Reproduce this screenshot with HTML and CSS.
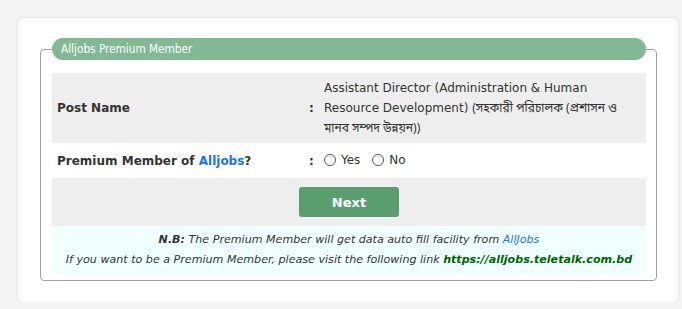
FILE: index.html
```html
<!DOCTYPE html>
<html lang="en">
<head>
  <meta charset="UTF-8">
  <meta name="viewport" content="width=device-width, initial-scale=1.0">
  <title>Alljobs Premium Member</title>
  <link rel="stylesheet" href="styles.css">
</head>
<body>
  <div class="card">
    <fieldset class="premium-box">
      <legend>Alljobs Premium Member</legend>
      <table class="info-table">
        <tr class="row-gray">
          <td class="label">Post Name</td>
          <td class="colon">:</td>
          <td class="value">Assistant Director (Administration &amp; Human Resource Development) <span class="bn">(সহকারী পরিচালক (প্রশাসন ও মানব সম্পদ উন্নয়ন))</span></td>
        </tr>
        <tr class="row-white">
          <td class="label">Premium Member of <span class="brand">Alljobs</span>?</td>
          <td class="colon">:</td>
          <td class="value">
            <label class="radio"><span class="circle"></span>Yes</label>
            <label class="radio"><span class="circle"></span>No</label>
          </td>
        </tr>
        <tr class="row-gray">
          <td colspan="3" class="btn-cell"><button class="next-btn">Next</button></td>
        </tr>
        <tr class="row-note">
          <td colspan="3" class="note">
            <b>N.B:</b> The Premium Member will get data auto fill facility from <a href="#" class="alljobs-link">AllJobs</a><br>
            If you want to be a Premium Member, please visit the following link <a href="#" class="site-link">https://alljobs.teletalk.com.bd</a>
          </td>
        </tr>
      </table>
    </fieldset>
  </div>
</body>
</html>
```

FILE: styles.css
```css
body {
  margin: 0;
  padding: 18px 4px 0 18px;
  background-color: #f4f4f4;
  font-family: "DejaVu Sans", Verdana, "Noto Sans", sans-serif;
  font-size: 12px;
  color: #333;
}

/* 外框卡片 */
.card {
  background-color: #fff;
  border-radius: 6px;
  box-shadow: 0 0 3px rgba(0, 0, 0, 0.12);
  padding: 20px 21px 21px 22px;
}

/* fieldset */
.premium-box {
  margin: 0;
  border: 1px solid #a0a0a0;
  border-radius: 4px;
  padding: 2px 10px 6px 11px;
}

.premium-box legend {
  box-sizing: border-box;
  width: 100%;
  padding: 0 9px;
  height: 22px;
  line-height: 22px;
  background-color: #82b994;
  color: #fff;
  border-radius: 11px;
  font-family: "DejaVu Sans Condensed", "DejaVu Sans", sans-serif;
  font-stretch: condensed;
  font-size: 11.7px;
}

/* 表格 */
.info-table {
  width: 100%;
  border-collapse: collapse;
  margin-top: 11px;
}

.info-table td {
  padding: 0;
  vertical-align: middle;
}

.row-gray {
  background-color: #eeeeee;
}

.row-white {
  background-color: #fff;
}

.row-note {
  background-color: #f0ffff;
}

.label {
  width: 250px;
  padding-left: 5px !important;
  font-weight: bold;
  color: #333;
  height: 35px;
}

.colon {
  width: 15px;
  padding-left: 2px !important;
  font-weight: bold;
  color: #333;
}

.value {
  padding: 5px 6px 5px 0 !important;
  line-height: 20px;
  color: #333;
}

.bn {
  font-family: "Noto Sans Bengali", "Lohit Bengali", "FreeSans", sans-serif;
  font-size: 12px;
  line-height: 1;
}

.brand {
  color: #1a73e8;
}

/* radio */
.radio {
  display: inline-flex;
  align-items: center;
  margin-right: 8px;
}

.circle {
  display: inline-block;
  width: 10px;
  height: 10px;
  border: 1px solid #555;
  border-radius: 50%;
  margin: 0 5px 0 0;
  background-color: #fff;
}

/* 按鈕 */
.btn-cell {
  text-align: center;
  padding: 9px 0 9px 0 !important;
  height: 30px;
}

.next-btn {
  width: 100px;
  height: 30px;
  background-color: #5a9e6f;
  color: #fff;
  border: none;
  border-radius: 3px;
  font-family: "DejaVu Sans", Verdana, sans-serif;
  font-weight: bold;
  font-size: 13px;
  cursor: pointer;
}

/* 說明 */
.note {
  text-align: center;
  font-style: italic;
  font-size: 11.1px;
  line-height: 20px;
  padding: 4px 0 4px 0 !important;
  color: #333;
}

.alljobs-link {
  color: #1a73e8;
  text-decoration: none;
}

.site-link {
  color: #006400;
  font-weight: bold;
  text-decoration: none;
}
```
